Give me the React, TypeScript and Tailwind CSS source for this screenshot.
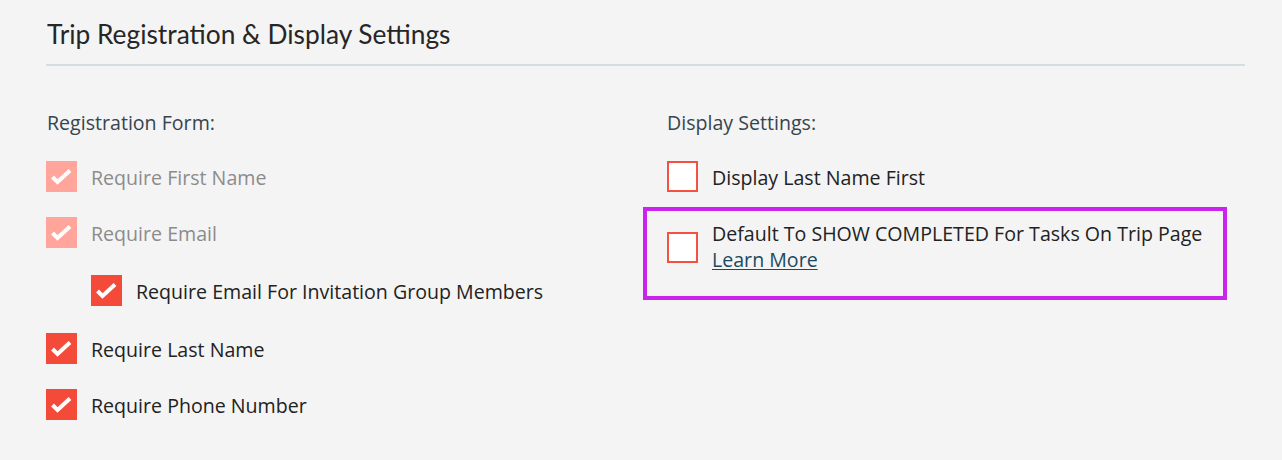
import React from "react";

function Check({ faded = false }: { faded?: boolean }) {
  return (
    <div
      className={`w-[31px] h-[31px] shrink-0 flex items-center justify-center ${
        faded ? "bg-[#ffa59c]" : "bg-[#f44a3a]"
      }`}
    >
      <svg width="31" height="31" viewBox="0 0 31 31">
        <polyline
          points="6.5,16 11.5,21 24,9.5"
          fill="none"
          stroke="white"
          strokeWidth="4"
          strokeLinejoin="miter"
        />
      </svg>
    </div>
  );
}

function Empty() {
  return <div className="w-[31px] h-[31px] shrink-0 bg-white border-2 border-[#f5513f]" />;
}

const body = { fontFamily: '"Open Sans", "Noto Sans", sans-serif' };

export default function App() {
  return (
    <div className="min-h-[460px] w-[1282px] bg-[#f4f4f4] pl-[46px] pr-[37px] pt-[19px]" style={body}>
      <div className="border-b-2 border-[#d5dde0] pb-[14px]">
        <h1
          className="pl-[1px] text-[26.3px] leading-[31px] font-normal text-[#262626]"
          style={{ fontFamily: 'Lato, "Open Sans", sans-serif' }}
        >
          Trip Registration &amp; Display Settings
        </h1>
      </div>
      <div className="flex mt-[43px] text-[19.6px] leading-[27px]">
        <div className="w-[597px] flex flex-col">
          <div className="pl-[1px] text-[#36454f]">Registration Form:</div>
          <div className="mt-[25px] h-[31px] flex items-center gap-[14px]">
            <Check faded />
            <span className="text-[#8c8c8c] pt-[2px]">Require First Name</span>
          </div>
          <div className="mt-[25px] h-[31px] flex items-center gap-[14px]">
            <Check faded />
            <span className="text-[#8c8c8c] pt-[2px]">Require Email</span>
          </div>
          <div className="mt-[27px] h-[31px] flex items-center gap-[14px] pl-[45px]">
            <Check />
            <span className="text-[#222] pt-[2px]">Require Email For Invitation Group Members</span>
          </div>
          <div className="mt-[27px] h-[31px] flex items-center gap-[14px]">
            <Check />
            <span className="text-[#222] pt-[2px]">Require Last Name</span>
          </div>
          <div className="mt-[25px] h-[31px] flex items-center gap-[14px]">
            <Check />
            <span className="text-[#222] pt-[2px]">Require Phone Number</span>
          </div>
        </div>
        <div className="flex flex-col">
          <div className="pl-[24px] text-[#36454f]">Display Settings:</div>
          <div className="mt-[25px] h-[31px] flex items-center gap-[14px] pl-[24px]">
            <Empty />
            <span className="text-[#222] pt-[2px]">Display Last Name First</span>
          </div>
          <div className="mt-[15px] w-[584px] border-4 border-[#cc22ee] pl-[20px] pt-[10px] pb-[23px] flex items-center gap-[14px]">
            <Empty />
            <div className="leading-[26px]">
              <div className="text-[#222]">Default To SHOW COMPLETED For Tasks On Trip Page</div>
              <a href="#" className="text-[#1b4a60] underline underline-offset-[2px]">
                Learn More
              </a>
            </div>
          </div>
        </div>
      </div>
    </div>
  );
}
